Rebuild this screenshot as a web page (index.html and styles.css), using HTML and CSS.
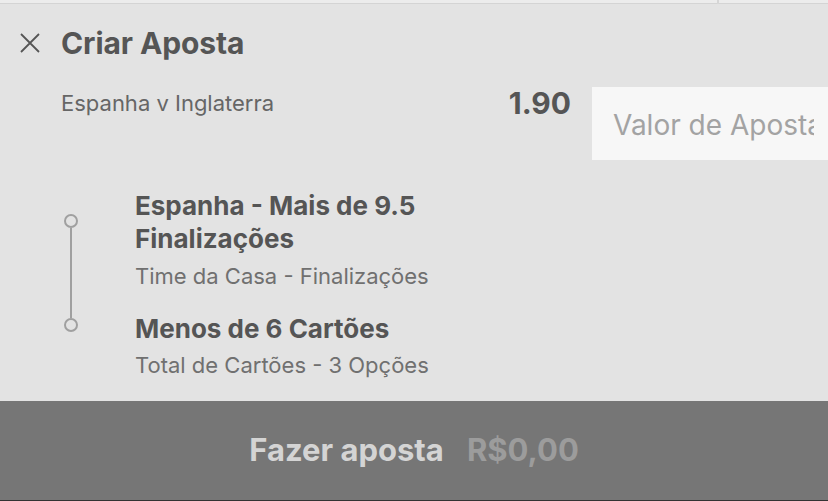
FILE: index.html
```html
<!DOCTYPE html>
<html lang="pt-BR">
<head>
<meta charset="utf-8">
<title>Criar Aposta</title>
<link rel="stylesheet" href="styles.css">
</head>
<body>
<div class="sheet">
  <div class="top-strip"><span class="strip-tick"></span></div>

  <header class="head">
    <button class="close" aria-label="Fechar">
      <svg width="20" height="20" viewBox="0 0 20 20"><path d="M1 1 L19 19 M19 1 L1 19" stroke="#555" stroke-width="1.8" fill="none"/></svg>
    </button>
    <h1 class="title">Criar Aposta</h1>
  </header>

  <div class="match-row">
    <div class="match">Espanha v Inglaterra</div>
    <div class="odds">1.90</div>
    <input class="stake" type="text" placeholder="Valor de Aposta">
  </div>

  <div class="legs">
    <div class="rail">
      <span class="dot"></span>
      <span class="bar"></span>
      <span class="dot"></span>
    </div>
    <div class="leg-list">
      <div class="leg">
        <div class="leg-name">Espanha - Mais de 9.5<br>Finalizações</div>
        <div class="leg-market">Time da Casa - Finalizações</div>
      </div>
      <div class="leg">
        <div class="leg-name">Menos de 6 Cartões</div>
        <div class="leg-market">Total de Cartões - 3 Opções</div>
      </div>
    </div>
  </div>

  <button class="place">
    <span class="place-label">Fazer aposta</span>
    <span class="place-amount">R$0,00</span>
  </button>
</div>
</body>
</html>
```

FILE: styles.css
```css
* { box-sizing: border-box; }

html, body {
  margin: 0;
  padding: 0;
  background: #e3e3e3;
}

body {
  font-family: Inter, "Open Sans", "Liberation Sans", sans-serif;
  color: #555;
  width: 828px;
  height: 501px;
  overflow: hidden;
}

.sheet {
  display: flex;
  flex-direction: column;
  height: 501px;
}

.top-strip {
  position: relative;
  height: 4px;
  flex: none;
  background: #ececec;
  border-bottom: 1px solid #d4d4d4;
}

.strip-tick {
  position: absolute;
  left: 717px;
  top: 0;
  width: 2px;
  height: 4px;
  background: #d6d6d6;
}

.head {
  display: flex;
  align-items: center;
  height: 78px;
  flex: none;
  padding: 0 0 0 20px;
}

.close {
  border: 0;
  background: none;
  padding: 0;
  width: 20px;
  height: 20px;
  display: flex;
  margin: 0 21px 0 0;
}

.title {
  margin: 0;
  font-size: 30px;
  line-height: 36px;
  font-weight: 700;
  color: #555;
  letter-spacing: -0.1px;
}

.match-row {
  display: flex;
  align-items: flex-start;
  height: 77px;
  flex: none;
}

.match {
  flex: 1;
  padding-left: 61px;
  padding-top: 8px;
  font-size: 22px;
  line-height: 26px;
  color: #666;
}

.odds {
  font-size: 30px;
  line-height: 36px;
  font-weight: 700;
  color: #555;
  padding-top: 3px;
  margin-right: 21px;
}

.stake {
  width: 236px;
  height: 73px;
  margin-top: 5px;
  border: 0;
  outline: none;
  background: #f7f7f7;
  padding: 2px 14px 0 21px;
  font-family: inherit;
  font-size: 28px;
  color: #555;
}

.stake::placeholder { color: #a3a3a3; }

.legs {
  display: flex;
  padding-top: 30px;
  flex: 1;
}

.rail {
  width: 135px;
  display: flex;
  flex-direction: column;
  align-items: flex-start;
  padding-left: 64px;
  padding-top: 25px;
}

.dot {
  width: 14px;
  height: 14px;
  border: 2px solid #a0a0a0;
  border-radius: 50%;
  flex: none;
}

.bar {
  width: 2px;
  height: 90px;
  margin-left: 6px;
  background: #a0a0a0;
}

.leg-list {
  display: flex;
  flex-direction: column;
  gap: 22px;
}

.leg-name {
  font-size: 26px;
  font-weight: 700;
  line-height: 33px;
  color: #555;
}

.leg-market {
  font-size: 22px;
  line-height: 28px;
  color: #707070;
  margin-top: 7px;
}

.leg + .leg .leg-market { margin-top: 6px; }

.place {
  height: 100px;
  flex: none;
  border: 0;
  border-bottom: 1px solid #333;
  background: #767676;
  display: flex;
  align-items: center;
  justify-content: center;
  gap: 23px;
  font-family: inherit;
  font-size: 31px;
  font-weight: 700;
  padding: 0 0 2px;
  margin: 0;
}

.place-label { color: #d4d4d4; }
.place-amount { color: #9c9c9c; }
```
